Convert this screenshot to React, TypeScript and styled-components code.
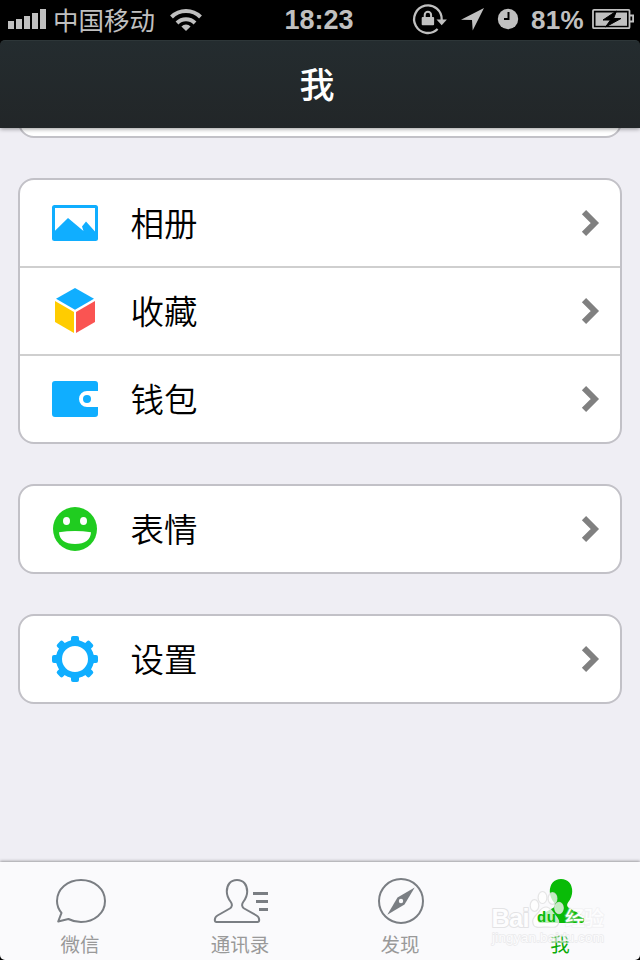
import React from "react";
import styled, { createGlobalStyle, css } from "styled-components";

const GlobalStyle = createGlobalStyle`
  * { box-sizing: border-box; }
  body { margin: 0; background: #000; }
`;

const cjk = `"Noto Sans CJK SC", sans-serif`;

const Screen = styled.div`
  display: flex;
  flex-direction: column;
  width: 640px;
  height: 960px;
  overflow: hidden;
  background: #000;
  font-family: ${cjk};
`;

const StatusBar = styled.header`
  display: grid;
  grid-template-columns: 1fr auto 1fr;
  align-items: center;
  flex: none;
  height: 40px;
  padding: 0 5px 0 8px;
  color: #c0c0c0;
`;

const StatusGroup = styled.div<{ $end?: boolean }>`
  display: flex;
  align-items: center;
  height: 40px;
  justify-content: ${(p) => (p.$end ? "flex-end" : "flex-start")};
  svg { flex: none; display: block; }
`;

const Carrier = styled.span`
  height: 40px;
  margin: 0 14px 0 7px;
  font-size: 25.5px;
  line-height: 38px;
  white-space: nowrap;
`;

const Digits = styled.span<{ $size: number }>`
  font: bold ${(p) => p.$size}px/40px "Liberation Sans", Arial, sans-serif;
`;

const Clock = styled(Digits)`
  margin: 0 3px 0 -2px;
`;

const Percent = styled(Digits)`
  margin: 0 8px 0 11px;
  letter-spacing: 0.3px;
`;

const TitleBar = styled.div`
  position: relative;
  z-index: 1;
  flex: none;
  height: 88px;
  border-radius: 5px 5px 0 0;
  background: linear-gradient(#242c2f, #222628);
  border-top: 1px solid #2d3638;
  box-shadow: 0 1px 4px rgba(0, 0, 0, 0.4);
  padding-right: 6px;
  color: #fff;
  text-align: center;
  font-size: 35px;
  font-weight: 500;
  line-height: 83px;
`;

const Content = styled.main`
  flex: 1;
  display: flex;
  flex-direction: column;
  gap: 40px;
  padding: 0 18px;
  background: #efeef4;
`;

const Card = styled.section<{ $clipped?: boolean }>`
  flex: none;
  border: 2px solid #c2c1c7;
  border-radius: 16px;
  background: #fff;
  ${(p) => p.$clipped && css`
    height: 40px;
    margin-top: -30px;
  `}
`;

const Row = styled.div`
  display: flex;
  align-items: center;
  height: 86px;
  padding: 0 20px 0 31px;
  & + & {
    height: 88px;
    border-top: 2px solid #cfcfcf;
  }
  svg { flex: none; display: block; }
`;

const RowLabel = styled.span`
  flex: 1;
  margin-left: 31.5px;
  padding-bottom: 2px;
  font-size: 33.5px;
  font-weight: 350;
  line-height: 48px;
  color: #000;
`;

const TabBar = styled.nav`
  position: relative;
  display: grid;
  grid-template-columns: repeat(4, 1fr);
  flex: none;
  height: 98px;
  background: #fafafc;
  border-radius: 0 0 5px 5px;
  box-shadow: 0 -1px 3px rgba(0, 0, 0, 0.35);
`;

const Tab = styled.div<{ $active?: boolean }>`
  display: flex;
  flex-direction: column;
  align-items: center;
  padding-top: 15px;
  color: ${(p) => (p.$active ? "#09bb07" : "#7a7e83")};
  svg { display: block; }
`;

const TabLabel = styled.span<{ $active?: boolean }>`
  margin-top: 5px;
  font-size: 19.5px;
  line-height: 28px;
  color: ${(p) => (p.$active ? "#09ab07" : "#999")};
`;

const Watermark = styled.div`
  position: absolute;
  left: 488px;
  top: 24px;
  width: 122px;
  height: 64px;
  svg { display: block; }
`;

const Signal = () => (
  <svg width="38" height="40" fill="currentColor">
    <path d="M0 21h6v8H0zM8 19h6v10H8zM16 16h6v13h-6zM24 13h6v16h-6zM32 9h6v20h-6z" />
  </svg>
);

const Wifi = () => (
  <svg width="34" height="40" viewBox="169 0 34 40" fill="none" stroke="currentColor" strokeWidth="4">
    <path d="M171.500 17a20.500 20.500 0 0 1 29 0M177 23a12.700 12.700 0 0 1 18 0" />
    <path d="M186 31l-4.600-4.600a6.500 6.500 0 0 1 9.200 0z" fill="currentColor" stroke="none" />
  </svg>
);

const StatusIcons = () => (
  <svg width="110" height="40" viewBox="410 0 110 40" fill="currentColor">
    <path d="M441.700 20A13.800 13.800 0 1 0 437.600 29" fill="none" stroke="currentColor" strokeWidth="2.300" />
    <path d="M436.500 19.500h10.400l-5.200 5.800z" />
    <rect x="421.700" y="17" width="12.400" height="8.300" rx="1" />
    <path d="M424.700 17.500v-2.500a3.200 3.200 0 0 1 6.400 0v2.500" fill="none" stroke="currentColor" strokeWidth="2" />
    <path d="M484 8l-11.300 22.500-.7-10.500-11-.3z" />
    <circle cx="508" cy="19" r="10.200" />
    <path d="M508.500 12v7h-4.500" fill="none" stroke="#000" strokeWidth="2" />
  </svg>
);

const Battery = () => (
  <svg width="43" height="40" viewBox="592 0 43 40" fill="currentColor">
    <rect x="593" y="9.800" width="36.500" height="18.400" rx="1" fill="none" stroke="currentColor" strokeWidth="1.800" />
    <path d="M630 14.500h4v8h-4v-2h2.200v-4H630z" />
    <rect x="595.500" y="12.500" width="31.500" height="13.300" />
    <path d="M616.500 11l-13.500 9h7.500l-5 7 15.500-8.500h-7.500z" fill="#000" stroke="#000" strokeWidth="1" />
  </svg>
);

const Chevron = () => (
  <svg width="20" height="30" viewBox="0 0 20 30" fill="none" stroke="#808080" strokeWidth="6">
    <path d="M4 4.200 14.800 15 4 25.800" />
  </svg>
);

const IconBox = ({ children }: { children: React.ReactNode }) => (
  <svg width="48" height="48" viewBox="0 0 48 48">{children}</svg>
);

const AlbumIcon = () => (
  <IconBox>
    <rect x="1" y="6" width="46" height="36" rx="2.500" fill="#10aeff" />
    <path d="M4 9h40v23.500L35 22.500 31 27.500 32.500 32 17 19 4 31.700z" fill="#fff" />
  </IconBox>
);

const CubeIcon = () => (
  <IconBox>
    <path d="M24 1l19 10.800L24 22.800 5 11.800z" fill="#10aeff" />
    <path d="M4 14l19 11v21L4 35z" fill="#ffcc00" />
    <path d="M44 14L25 25v21l19-11z" fill="#fa5452" />
  </IconBox>
);

const WalletIcon = () => (
  <IconBox>
    <path d="M4 6h40a3 3 0 0 1 3 3v7H36a8 8 0 0 0 0 16h11v7a3 3 0 0 1-3 3H4a3 3 0 0 1-3-3V9a3 3 0 0 1 3-3z" fill="#10aeff" />
    <circle cx="36" cy="24" r="4" fill="#10aeff" />
  </IconBox>
);

const SmileIcon = () => (
  <IconBox>
    <circle cx="24" cy="24" r="22" fill="#20cc20" />
    <ellipse cx="15.500" cy="16" rx="3.500" ry="4.100" fill="#fff" />
    <ellipse cx="32.500" cy="16" rx="3.500" ry="4.100" fill="#fff" />
    <path d="M8 27.200Q24 24.800 40 27.200C39.700 34.500 34 39 24 39S8.300 34.500 8 27.200z" fill="#fff" />
  </IconBox>
);

const GearIcon = () => (
  <IconBox>
    <circle cx="24" cy="24" r="16" fill="none" stroke="#10aeff" strokeWidth="6" />
    {[0, 45, 90, 135, 180, 225, 270, 315].map((angle) => (
      <path
        key={angle}
        d="M20 3q0-2 2-2h4q2 0 2 2v2.500l2.500 1.500h-13l2.500-1.500z"
        transform={`rotate(${angle} 24 24)`}
        fill="#10aeff"
      />
    ))}
  </IconBox>
);

const TabIcon = ({ children }: { children: React.ReactNode }) => (
  <svg width="60" height="48" viewBox="0 0 60 48" fill="none" stroke="currentColor" strokeWidth="2">
    {children}
  </svg>
);

const ChatIcon = () => (
  <TabIcon>
    <path d="M11.500 35.800C8.500 32.300 7 28.300 7 24 7 12 17.500 3 31 3s24 9 24 21-10.500 21-24 21c-4.500 0-8.800-1-12.600-3L8.200 44.500z" strokeLinejoin="round" />
  </TabIcon>
);

const PERSON =
  "M27 3C20.500 3 16.800 7.800 16.800 14.500c0 4.500 1.700 7.500 4 10.500 1.700 2.400 1.400 5-1 6.500L7.500 38.500C5.300 39.800 4.800 41 4.800 43q0 2 1.800 2h40.800q1.800 0 1.800-2c0-2-.5-3.200-2.700-4.500L34.200 31.500c-2.400-1.500-2.700-4.100-1-6.500 2.300-3 4-6 4-10.500C37.200 7.800 33.500 3 27 3z";

const ContactsIcon = () => (
  <TabIcon>
    <path d={PERSON} />
    <path d="M43 16.500h15M46 24.500h12M49 32.500h9" strokeWidth="3" />
  </TabIcon>
);

const CompassIcon = () => (
  <TabIcon>
    <circle cx="31" cy="24" r="22" />
    <path d="M44.700 10.500L34.500 27.500 17.300 37.700 27.500 20.500z" fill="currentColor" stroke="none" />
    <circle cx="31" cy="24" r="2.200" fill="#fafafc" stroke="none" />
  </TabIcon>
);

const MeIcon = () => (
  <TabIcon>
    <path d={PERSON} fill="currentColor" transform="translate(4 0)" />
  </TabIcon>
);

const WatermarkMark = () => (
  <Watermark>
    <svg width="122" height="64" viewBox="488 886 122 64">
      <g fill="#fff" fillOpacity="0.75" stroke="#dededf" strokeOpacity="0.8" strokeWidth="1.200">
        <ellipse cx="534.500" cy="905.500" rx="4.300" ry="5.800" />
        <ellipse cx="542.500" cy="897.500" rx="4.400" ry="6" />
        <ellipse cx="552.500" cy="898.500" rx="4.400" ry="5.800" />
        <ellipse cx="559" cy="908" rx="4.300" ry="5.600" />
        <path d="M546 907c-5 0-6 4-9 7-4 4-5 6-4 9.500 1 5 6 4 13 3.500 8 .5 11.500 1 12.500-3.500 1-4-1.500-6-4.500-9.500-3-4-4-7-8-7z" />
      </g>
      <g stroke="#e3e3e5" fill="#fdfdfe" strokeWidth="2" paintOrder="stroke" strokeLinejoin="round" fontFamily='"Liberation Sans", "Noto Sans CJK SC", sans-serif'>
        <text x="491.500" y="927" fontSize="25.500" fontWeight="bold" textLength="38">Bai</text>
        <text x="565" y="926" fontSize="20" fontWeight="500" textLength="39" strokeOpacity="0.35">经验</text>
        <text x="492" y="941.500" fontSize="13.500" strokeWidth="1.400" textLength="112" opacity="0.7">jingyan.baidu.com</text>
      </g>
      <text x="537" y="922" fontSize="15" fontWeight="bold" fontFamily="Liberation Sans, sans-serif" fill="#09bb07" textLength="19">du</text>
    </svg>
  </Watermark>
);

const groups = [
  [
    { label: "相册", Icon: AlbumIcon },
    { label: "收藏", Icon: CubeIcon },
    { label: "钱包", Icon: WalletIcon },
  ],
  [{ label: "表情", Icon: SmileIcon }],
  [{ label: "设置", Icon: GearIcon }],
];

const tabs = [
  { label: "微信", Icon: ChatIcon },
  { label: "通讯录", Icon: ContactsIcon },
  { label: "发现", Icon: CompassIcon },
  { label: "我", Icon: MeIcon, active: true },
];

export default function App() {
  return (
    <Screen>
      <GlobalStyle />
      <StatusBar>
        <StatusGroup>
          <Signal />
          <Carrier>中国移动</Carrier>
          <Wifi />
        </StatusGroup>
        <Clock $size={27}>18:23</Clock>
        <StatusGroup $end>
          <StatusIcons />
          <Percent $size={26}>81%</Percent>
          <Battery />
        </StatusGroup>
      </StatusBar>
      <TitleBar>我</TitleBar>
      <Content>
        <Card $clipped />
        {groups.map((rows) => (
          <Card key={rows[0].label}>
            {rows.map(({ label, Icon }) => (
              <Row key={label}>
                <Icon />
                <RowLabel>{label}</RowLabel>
                <Chevron />
              </Row>
            ))}
          </Card>
        ))}
      </Content>
      <TabBar>
        {tabs.map(({ label, Icon, active }) => (
          <Tab key={label} $active={active}>
            <Icon />
            <TabLabel $active={active}>{label}</TabLabel>
          </Tab>
        ))}
        <WatermarkMark />
      </TabBar>
    </Screen>
  );
}
